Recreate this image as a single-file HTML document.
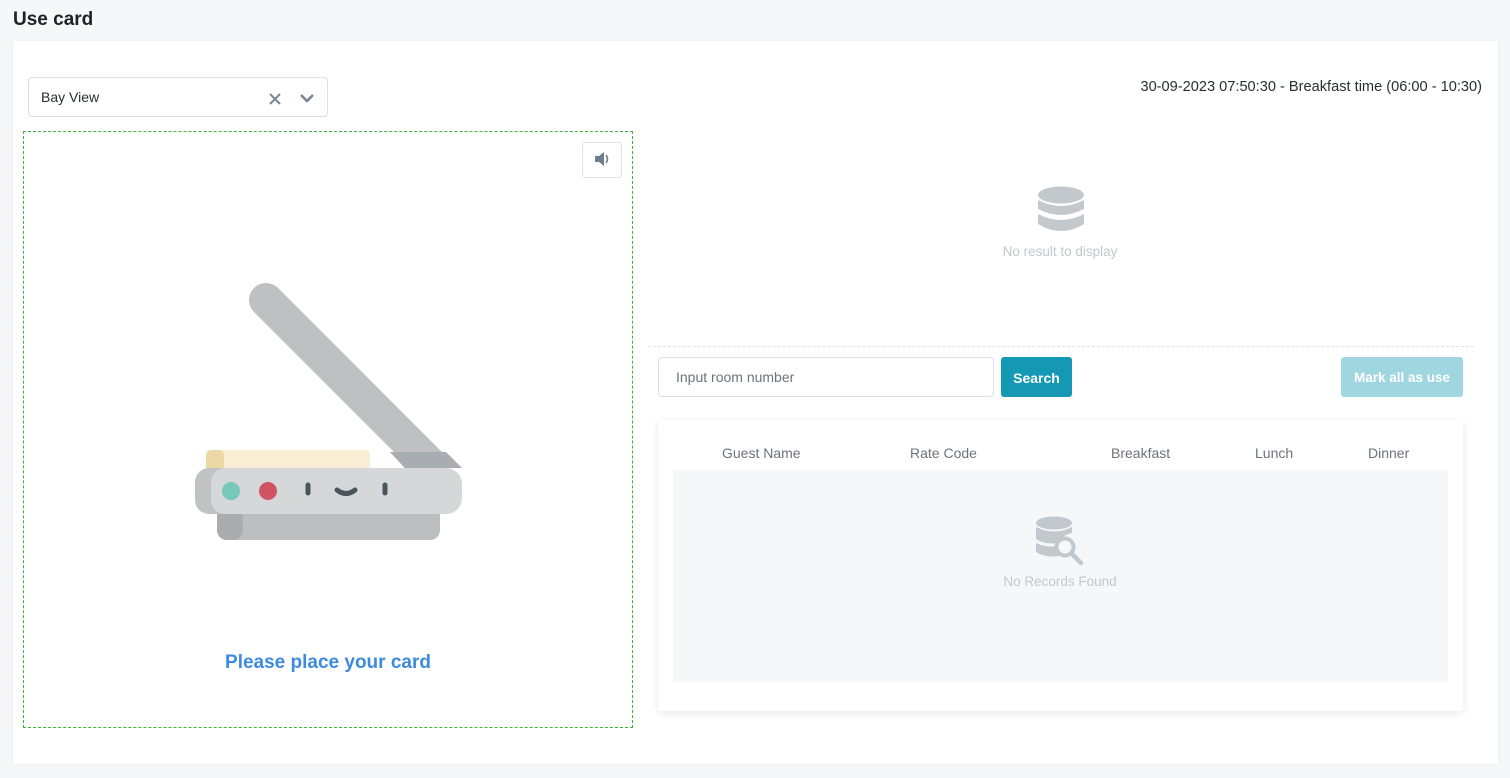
<!DOCTYPE html>
<html><head><style>
body{margin:0;width:1510px;height:778px;background:#f6f7f9;font-family:"Liberation Sans",sans-serif;position:relative;overflow:hidden;color:#212529}
.abs{position:absolute}
h1{position:absolute;left:13px;top:9px;margin:0;font-size:19px;font-weight:bold;color:#1e2125}
.card{left:13px;top:41px;width:1485px;height:723px;background:#fff;box-shadow:0 0 4px rgba(0,0,0,.06)}
</style></head><body>
<h1>Use card</h1>
<div class="abs card"></div>
<div class="abs" style="left:28px;top:77px;width:298px;height:38px;border:1px solid #dcdfe3;border-radius:4px;background:#fff"></div>
<div class="abs" style="left:41px;top:89px;font-size:14px;color:#2a2e33">Bay View</div>
<svg class="abs" style="left:266px;top:89px" width="50" height="20"><path d="M4 5l10 10M14 5L4 15" stroke="#7d8792" stroke-width="2"/><path d="M35 6l6 6 6-6" stroke="#7d8792" stroke-width="2.6" fill="none"/></svg>
<div class="abs" style="right:28px;top:79px;font-size:14.6px;color:#2a2e33">30-09-2023 07:50:30 - Breakfast time (06:00 - 10:30)</div>
<div class="abs" style="left:23px;top:131px;width:608px;height:595px;border:1px dashed #3ab53a"></div>
<div class="abs" style="left:582px;top:142px;width:38px;height:34px;border:1px solid #dfe2e6;border-radius:4px;background:#fff"></div>
<svg class="abs" style="left:594px;top:151px" width="16" height="16"><path d="M1 5h4l5-4v14l-5-4H1z" fill="#6e7e8f"/><path d="M12 4q3 4 0 8" stroke="#6e7e8f" stroke-width="1.6" fill="none"/></svg>
<svg class="abs" style="left:0;top:0" width="640" height="560">
<defs><clipPath id="c"><rect x="0" y="0" width="640" height="468"/></clipPath></defs>
<g clip-path="url(#c)">
<line x1="266" y1="300" x2="444" y2="478" stroke="#bfc0c2" stroke-width="34" stroke-linecap="round"/>
<polygon points="390,452 446,452 470,476 412,476" fill="#a9adb1"/>
</g>
<rect x="206" y="450" width="164" height="22" rx="5" fill="#f8eed3"/>
<rect x="206" y="450" width="18" height="22" rx="5" fill="#edd7a4"/>
<rect x="217" y="506" width="223" height="34" rx="10" fill="#bdbec0"/>
<rect x="217" y="506" width="26" height="34" rx="10" fill="#aaadb0"/>
<rect x="195" y="468" width="267" height="46" rx="16" fill="#d6d7d9"/>
<path d="M211 468h-2a14 14 0 0 0-14 14v18a14 14 0 0 0 14 14h16a14 14 0 0 1-14-14v-18a14 14 0 0 1 14-14z" fill="#c1c2c4"/>
<circle cx="231" cy="491" r="9" fill="#76c8b9"/>
<circle cx="268" cy="491" r="9" fill="#d05462"/>
<path d="M308 485v8M385 485v8" stroke="#4d535b" stroke-width="5" stroke-linecap="round"/>
<path d="M337 490q9 7 18 0" stroke="#4d535b" stroke-width="5" fill="none" stroke-linecap="round"/>
</svg>
<div class="abs" style="left:23px;width:610px;top:652px;text-align:center;font-size:19px;font-weight:bold;color:#3d8be0">Please place your card</div>
<svg class="abs" style="left:1037px;top:186px" width="48" height="52"><ellipse cx="24" cy="9" rx="23" ry="8.5" fill="#c3c8cd"/><path d="M1 14q23 12 46 0v9q-23 12-46 0z" fill="#c3c8cd"/><path d="M1 28q23 12 46 0v10q-23 14-46 0z" fill="#c3c8cd"/></svg>
<div class="abs" style="left:960px;width:200px;text-align:center;top:244px;font-size:13.5px;color:#c3c7cc">No result to display</div>
<div class="abs" style="left:648px;top:346px;width:826px;border-top:1px dashed #dfe2e6"></div>
<div class="abs" style="left:658px;top:357px;width:334px;height:38px;border:1px solid #dcdfe3;border-radius:4px"></div>
<div class="abs" style="left:676px;top:369px;font-size:14px;color:#6c737b">Input room number</div>
<div class="abs" style="left:1001px;top:357px;width:71px;height:40px;background:#1498b4;border-radius:3px;color:#fff;font-size:14px;font-weight:bold;text-align:center;line-height:42px">Search</div>
<div class="abs" style="left:1341px;top:357px;width:122px;height:40px;background:#9fd6e0;border-radius:3px;color:#fff;font-size:13.5px;font-weight:bold;text-align:center;line-height:42px">Mark all as use</div>
<div class="abs" style="left:658px;top:420px;width:805px;height:291px;background:#fff;box-shadow:0 2px 8px rgba(0,0,0,.1);border-radius:3px"></div>
<div class="abs" style="top:445px;font-size:14px;color:#6c737b;left:722px">Guest Name</div>
<div class="abs" style="top:445px;font-size:14px;color:#6c737b;left:910px">Rate Code</div>
<div class="abs" style="top:445px;font-size:14px;color:#6c737b;left:1111px">Breakfast</div>
<div class="abs" style="top:445px;font-size:14px;color:#6c737b;left:1255px">Lunch</div>
<div class="abs" style="top:445px;font-size:14px;color:#6c737b;left:1368px">Dinner</div>
<div class="abs" style="left:673px;top:470px;width:775px;height:212px;background:#f6f7f9"></div>
<svg class="abs" style="left:1035px;top:516px" width="50" height="50"><ellipse cx="19" cy="7" rx="18" ry="6.5" fill="#c3c8cd"/><path d="M1 11q18 9 36 0v6q-10 2-13 10q-14 2-23-4z" fill="#c3c8cd"/><path d="M1 27q10 5 21 3q0 6 3 10q-15 2-24-4z" fill="#c3c8cd"/><circle cx="30" cy="31" r="8.5" stroke="#c3c8cd" stroke-width="4" fill="none"/><path d="M36 37l10 10" stroke="#c3c8cd" stroke-width="4.5" stroke-linecap="round"/></svg>
<div class="abs" style="left:960px;width:200px;text-align:center;top:574px;font-size:13.5px;color:#c3c7cc">No Records Found</div>
</body></html>
